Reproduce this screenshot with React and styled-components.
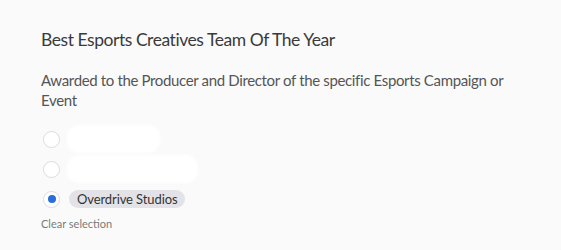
import React, { useState } from "react";
import styled, { createGlobalStyle } from "styled-components";

const Global = createGlobalStyle`
	body {
		margin: 0;
		background: #fafafa;
		font-family: Lato, "Open Sans", sans-serif;
	}
`;

const Wrapper = styled.div`
	padding: 28px 41px 0 41px;
`;

const Title = styled.div`
	font-size: 17.5px;
	letter-spacing: -0.45px;
	line-height: 24px;
	color: #3a3a3a;
	margin-bottom: 18px;
`;

const Desc = styled.div`
	font-size: 15px;
	letter-spacing: -0.35px;
	line-height: 20px;
	color: #555555;
	max-width: 500px;
	margin-bottom: 14px;
`;

const Options = styled.div`
	display: flex;
	flex-direction: column;
`;

const Row = styled.label`
	display: flex;
	align-items: center;
	height: 30px;
	gap: 9px;
	padding-left: 2px;
	cursor: pointer;
`;

const Circle = styled.span`
	box-sizing: border-box;
	width: 17px;
	height: 17px;
	border-radius: 50%;
	border: 1.5px solid #dcdcdc;
	background: #ffffff;
	display: flex;
	align-items: center;
	justify-content: center;
	flex-shrink: 0;
	&::after {
		content: "";
		width: 8px;
		height: 8px;
		border-radius: 50%;
		background: ${(p) => (p.checked ? "#2a6ed8" : "transparent")};
	}
`;

const Chip = styled.span`
	height: 18px;
	line-height: 18px;
	padding: 0 8px;
	border-radius: 9px;
	background: #e3e3e7;
	font-size: 13px;
	letter-spacing: -0.1px;
	color: #333333;
`;

const Redacted = styled.span`
	width: ${(p) => p.w}px;
	height: 24px;
	border-radius: 10px;
	background: #ffffff;
	box-shadow: 0 0 3px 2px #ffffff;
`;

const Clear = styled.div`
	margin-top: 3px;
	font-size: 11px;
	line-height: 14px;
	color: #7a7a7a;
`;

const OPTIONS = [
	{ value: 1, w: 89 },
	{ value: 2, w: 127 },
	{ value: 3, name: "Overdrive Studios" },
];

export default function App() {
	const [value, setValue] = useState(3);

	return (
		<>
			<Global />
			<Wrapper>
				<Title>Best Esports Creatives Team Of The Year</Title>
				<Desc>Awarded to the Producer and Director of the specific Esports Campaign or Event</Desc>
				<Options>
					{OPTIONS.map((o) => (
						<Row key={o.value} onClick={() => setValue(o.value)}>
							<Circle checked={value === o.value} />
							{o.name ? <Chip>{o.name}</Chip> : <Redacted w={o.w} />}
						</Row>
					))}
				</Options>
				<Clear>Clear selection</Clear>
			</Wrapper>
		</>
	);
}
